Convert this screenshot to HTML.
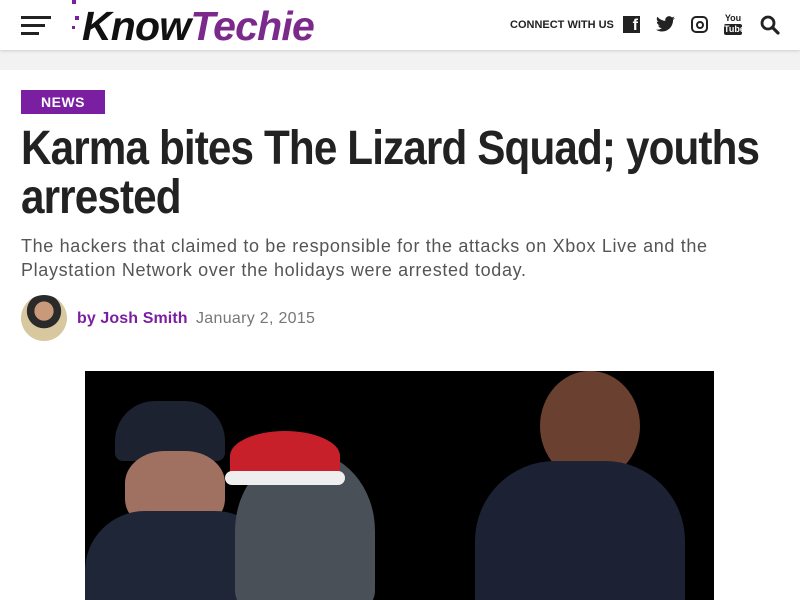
<!DOCTYPE html>
<html><head><meta charset="utf-8"><style>
*{margin:0;padding:0;box-sizing:border-box}
body{width:800px;height:600px;overflow:hidden;background:#fff;font-family:"Liberation Sans",sans-serif;position:relative}
.hdr{position:absolute;left:0;top:0;width:800px;height:50px;background:#fff;box-shadow:0 1px 3px rgba(0,0,0,.15);z-index:2}
.strip{position:absolute;left:0;top:50px;width:800px;height:20px;background:#f2f2f2}
.ham div{position:absolute;left:21px;height:3px;background:#222}
.logo{position:absolute;left:82px;top:3px;font-size:41px;font-style:italic;font-weight:bold;letter-spacing:-0.8px}
.conn{position:absolute;left:510px;top:19px;font-size:11px;font-weight:bold;color:#222}
.tag{position:absolute;left:21px;top:90px;width:84px;height:24px;background:#7b1fa2;color:#fff;font-weight:bold;font-size:14px;text-align:center;line-height:24px;letter-spacing:.5px}
h1{position:absolute;left:21px;top:124px;white-space:nowrap;font-size:48px;line-height:49px;font-weight:bold;color:#222;letter-spacing:-1px;transform:scaleX(0.88);transform-origin:left}
.sub{position:absolute;left:21px;top:234px;white-space:nowrap;font-size:18px;line-height:24px;color:#555;letter-spacing:.65px}
.av{position:absolute;left:21px;top:295px;width:46px;height:46px;border-radius:50%;background:radial-gradient(circle at 50% 35%,#c89a7a 0 25%,#2a2a2a 26% 45%,#d8c8a0 46%)}
.by{position:absolute;left:77px;top:310px;font-size:16px;font-weight:bold;color:#7b1fa2;letter-spacing:.1px}
.date{position:absolute;left:196px;top:310px;font-size:16px;color:#777;letter-spacing:.3px}
.img{position:absolute;left:85px;top:371px;width:629px;height:229px;background:#000;overflow:hidden}
</style></head><body>
<div class="hdr">
<div class="ham"><div style="top:16px;width:30px"></div><div style="top:24px;width:24px"></div><div style="top:32px;width:18px"></div></div>
<div style="position:absolute;left:72px;top:0;width:4px;height:4px;background:#7b1fa2"></div>
<div style="position:absolute;left:75px;top:16px;width:4px;height:4px;background:#7b1fa2"></div>
<div style="position:absolute;left:72px;top:26px;width:3px;height:3px;background:#7b1fa2"></div>
<div class="logo"><span style="color:#111">Know</span><span style="color:#7b2a8c">Techie</span></div>
<div class="conn">CONNECT WITH US</div>
<div style="position:absolute;left:623px;top:16px;width:17px;height:17px;background:#222;color:#fff;font-weight:bold;font-size:16px;text-align:right;line-height:20px;padding-right:2px">f</div>
<svg style="position:absolute;left:656px;top:16px" width="19" height="16" viewBox="0 0 24 20"><path fill="#222" d="M24 2.4a10 10 0 0 1-2.8.8A5 5 0 0 0 23.3.5a10 10 0 0 1-3.1 1.2A4.9 4.9 0 0 0 11.8 6 14 14 0 0 1 1.7.9a4.9 4.9 0 0 0 1.5 6.6A4.9 4.9 0 0 1 1 6.9a4.9 4.9 0 0 0 3.9 4.8 5 5 0 0 1-2.2.1 4.9 4.9 0 0 0 4.6 3.4A9.9 9.9 0 0 1 0 17.2 14 14 0 0 0 7.5 19.4c9.1 0 14-7.5 14-14v-.6A10 10 0 0 0 24 2.4z"/></svg>
<div style="position:absolute;left:691px;top:16px;width:17px;height:17px;border:2px solid #222;border-radius:5px"><div style="position:absolute;left:2.5px;top:2.5px;width:8px;height:8px;border:2px solid #222;border-radius:50%"></div></div>
<div style="position:absolute;left:724px;top:14px;font-size:9px;font-weight:bold;color:#222;line-height:9px;text-align:center;width:18px">You<div style="background:#222;color:#fff;border-radius:2px;margin-top:1px;font-size:9px;line-height:11px">Tube</div></div>
<svg style="position:absolute;left:760px;top:15px" width="20" height="20" viewBox="0 0 20 20"><circle cx="8" cy="8" r="6" fill="none" stroke="#222" stroke-width="2.8"/><path d="M12.5 12.5 18 18" stroke="#222" stroke-width="3.2" stroke-linecap="round"/></svg>
</div>
<div class="strip"></div>
<div class="tag">NEWS</div>
<h1>Karma bites The Lizard Squad; youths<br>arrested</h1>
<div class="sub">The hackers that claimed to be responsible for the attacks on Xbox Live and the<br>Playstation Network over the holidays were arrested today.</div>
<div class="av"></div>
<div class="by">by Josh Smith</div>
<div class="date">January 2, 2015</div>
<div class="img">
<div style="position:absolute;left:30px;top:30px;width:110px;height:60px;background:#1c2230;border-radius:40px 40px 8px 8px"></div>
<div style="position:absolute;left:40px;top:80px;width:100px;height:80px;background:#a07060;border-radius:40%"></div>
<div style="position:absolute;left:0;top:140px;width:190px;height:100px;background:#1e2638;border-radius:60px 60px 0 0"></div>
<div style="position:absolute;left:455px;top:0;width:100px;height:110px;background:#6a4030;border-radius:50%"></div>
<div style="position:absolute;left:390px;top:90px;width:210px;height:150px;background:#1c2233;border-radius:80px 80px 0 0"></div>
<div style="position:absolute;left:150px;top:80px;width:140px;height:160px;background:#4a5058;border-radius:50% 50% 20px 20px"></div>
<div style="position:absolute;left:145px;top:60px;width:110px;height:50px;background:#c8202a;border-radius:50% 50% 10px 10px"></div>
<div style="position:absolute;left:140px;top:100px;width:120px;height:14px;background:#eee;border-radius:7px"></div>
</div>
</body></html>
